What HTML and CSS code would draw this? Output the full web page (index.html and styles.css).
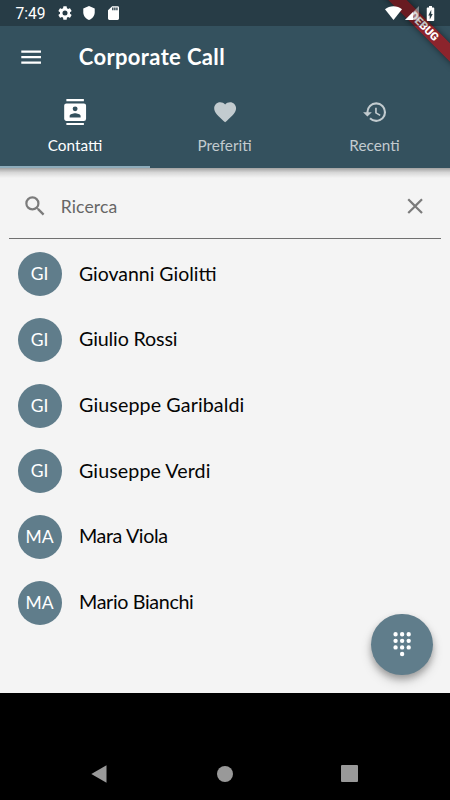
FILE: index.html
```html
<!DOCTYPE html>
<html lang="it">
<head>
<meta charset="utf-8">
<title>Corporate Call</title>
<link rel="stylesheet" href="styles.css">
</head>
<body>
<div class="phone">
  <header class="header">
    <div class="statusbar">
      <span class="clock">7:49</span>
      <svg class="st-gear" viewBox="2 2 20 20"><path d="M19.14 12.94c.04-.3.06-.61.06-.94s-.02-.64-.07-.94l2.03-1.58a.5.5 0 0 0 .12-.61l-1.92-3.32a.5.5 0 0 0-.59-.22l-2.39.96c-.5-.38-1.03-.7-1.62-.94l-.36-2.54a.48.48 0 0 0-.48-.41h-3.84a.47.47 0 0 0-.47.41l-.36 2.54c-.59.24-1.13.57-1.62.94l-2.39-.96a.48.48 0 0 0-.59.22L2.74 8.87a.48.48 0 0 0 .12.61l2.03 1.58a6.6 6.6 0 0 0-.02 1.88l-2.03 1.58a.5.5 0 0 0-.12.61l1.92 3.32c.12.22.37.29.59.22l2.39-.96c.5.38 1.03.7 1.62.94l.36 2.54c.05.24.24.41.48.41h3.84c.24 0 .44-.17.47-.41l.36-2.54c.59-.24 1.13-.56 1.62-.94l2.39.96c.22.08.47 0 .59-.22l1.92-3.32a.5.5 0 0 0-.12-.61zM12 15.6a3.6 3.6 0 1 1 0-7.2 3.6 3.6 0 0 1 0 7.2z"/></svg>
      <svg class="st-shield" viewBox="3 1 18 22"><path d="M12 1 3 5v6c0 5.55 3.84 10.74 9 12 5.16-1.26 9-6.45 9-12V5z"/></svg>
      <svg class="st-card" viewBox="4 2 16 20"><path d="M18 2h-8L4 8v12a2 2 0 0 0 2 2h12a2 2 0 0 0 2-2V4a2 2 0 0 0-2-2zm-6 6h-2V4h2zm3 0h-2V4h2zm3 0h-2V4h2z"/></svg>
      <span class="spacer"></span>
      <svg class="st-wifi" viewBox="0 0 17 14"><path d="M8.500 14 0 3.300C4.600-.9 12.400-.9 17 3.300z"/></svg>
      <svg class="st-signal" viewBox="0 0 14 14"><path d="M0 14 14 0v14z" opacity=".4"/><path d="M0 14 8 6v8z"/></svg>
      <svg class="st-battery" viewBox="7 2 10 20"><path d="M15.670 4H14V2h-4v2H8.330C7.600 4 7 4.600 7 5.330v15.330C7 21.400 7.600 22 8.330 22h7.330c.74 0 1.340-.6 1.340-1.330V5.330C17 4.600 16.400 4 15.670 4zM11 20v-5.500H9L13 7v5.500h2z"/></svg>
    </div>
    <div class="toolbar">
      <svg class="icon menu" viewBox="0 0 24 24"><path d="M3 18h18v-2H3zm0-5h18v-2H3zm0-7v2h18V6z"/></svg>
      <h1 class="title"><span>Corporate Call</span></h1>
    </div>
    <nav class="tabs">
      <a class="tab active">
        <svg class="icon" viewBox="0 0 24 24"><path d="M20 0H4v2h16zM4 24h16v-2H4zM20 4H4a2 2 0 0 0-2 2v12c0 1.100.9 2 2 2h16a2 2 0 0 0 2-2V6a2 2 0 0 0-2-2zm-8 2.750a2.250 2.250 0 1 1 0 4.500 2.250 2.250 0 0 1 0-4.500zM17 17H7v-1.500c0-1.670 3.330-2.500 5-2.500s5 .83 5 2.500z"/></svg>
        <span class="t-contatti">Contatti</span>
      </a>
      <a class="tab">
        <svg class="icon" viewBox="0 0 24 24"><path d="m12 21.350-1.450-1.320C5.400 15.360 2 12.280 2 8.500 2 5.420 4.420 3 7.500 3c1.740 0 3.410.81 4.500 2.090C13.090 3.810 14.760 3 16.500 3 19.580 3 22 5.420 22 8.500c0 3.780-3.400 6.860-8.550 11.540z"/></svg>
        <span class="t-preferiti">Preferiti</span>
      </a>
      <a class="tab">
        <svg class="icon" viewBox="0 0 24 24"><path d="M13 3a9 9 0 0 0-9 9H1l3.890 3.890.07.14L9 12H6c0-3.870 3.130-7 7-7s7 3.130 7 7-3.130 7-7 7c-1.930 0-3.680-.79-4.940-2.060l-1.420 1.420A8.950 8.950 0 0 0 13 21a9 9 0 0 0 0-18zm-1 5v5l4.280 2.540.72-1.210-3.500-2.080V8z"/></svg>
        <span class="t-recenti">Recenti</span>
      </a>
    </nav>
    <div class="ribbon">DEBUG</div>
  </header>
  <main class="content">
    <div class="search">
      <svg class="icon" viewBox="0 0 24 24"><path d="M15.500 14h-.79l-.28-.27A6.470 6.470 0 0 0 16 9.500 6.500 6.500 0 1 0 9.500 16c1.610 0 3.090-.59 4.230-1.570l.27.28v.79l5 4.990L20.490 19zm-6 0a4.500 4.500 0 1 1 0-9 4.500 4.500 0 0 1 0 9z"/></svg>
      <span class="hint">Ricerca</span>
      <svg class="icon" viewBox="0 0 24 24"><path d="M19 6.410 17.590 5 12 10.590 6.410 5 5 6.410 10.590 12 5 17.590 6.410 19 12 13.410 17.590 19 19 17.590 13.410 12z"/></svg>
    </div>
    <ul class="list">
      <li class="row"><span class="avatar">GI</span><span class="name n1">Giovanni Giolitti</span></li>
      <li class="row"><span class="avatar">GI</span><span class="name n2">Giulio Rossi</span></li>
      <li class="row"><span class="avatar">GI</span><span class="name n3">Giuseppe Garibaldi</span></li>
      <li class="row"><span class="avatar">GI</span><span class="name n4">Giuseppe Verdi</span></li>
      <li class="row"><span class="avatar">MA</span><span class="name n5">Mara Viola</span></li>
      <li class="row"><span class="avatar">MA</span><span class="name n6">Mario Bianchi</span></li>
    </ul>
    <div class="fab">
      <svg class="icon" viewBox="0 0 24 24"><path d="M12 19a2 2 0 1 0 0 4 2 2 0 0 0 0-4zM6 1a2 2 0 1 0 0 4 2 2 0 0 0 0-4zm0 6a2 2 0 1 0 0 4 2 2 0 0 0 0-4zm0 6a2 2 0 1 0 0 4 2 2 0 0 0 0-4zm12-8a2 2 0 1 0 0-4 2 2 0 0 0 0 4zm-6 8a2 2 0 1 0 0 4 2 2 0 0 0 0-4zm6 0a2 2 0 1 0 0 4 2 2 0 0 0 0-4zm0-6a2 2 0 1 0 0 4 2 2 0 0 0 0-4zm-6 0a2 2 0 1 0 0 4 2 2 0 0 0 0-4zm0-6a2 2 0 1 0 0 4 2 2 0 0 0 0-4z"/></svg>
    </div>
  </main>
  <footer class="navbar">
    <div><svg class="nav-back" viewBox="0 0 16 18"><path d="M15.500 .3v17.400L.3 9z"/></svg></div>
    <div><span class="nav-home"></span></div>
    <div><span class="nav-recent"></span></div>
  </footer>
</div>
</body>
</html>
```

FILE: styles.css
```css
* { box-sizing: border-box; }
body { margin: 0; font-family: Lato, "Open Sans", sans-serif; }
svg { display: block; fill: currentColor; flex: none; }
.phone { width: 450px; height: 800px; display: flex; flex-direction: column; overflow: hidden; background: #000; }
.icon { width: 26.25px; height: 26.25px; }

.header { position: relative; z-index: 1; height: 168px; background: #34515e; color: #fff; overflow: hidden; flex: none; }
.statusbar { position: relative; z-index: 2; height: 26px; display: flex; align-items: center; padding: 0 15.500px 0 15.500px; background: rgba(0, 0, 0, .25); }
.clock { width: 42.500px; font: 400 15.600px Roboto, sans-serif; padding-top: 2px; }
.st-gear { width: 14px; height: 14px; margin-right: 11px; }
.st-shield { width: 12px; height: 14px; margin-right: 12.500px; }
.st-card { width: 11px; height: 14px; }
.spacer { flex: 1; }
.st-wifi { width: 17px; height: 14px; margin-right: 2.500px; }
.st-signal { width: 14px; height: 14px; margin-right: 7px; }
.st-battery { width: 9px; height: 15px; }

.toolbar { height: 61px; display: flex; align-items: center; padding: 1px 0 0 17.500px; }
.title { margin: 0 0 0 35px; font-size: 22px; font-weight: 700; line-height: 30px; letter-spacing: .36px; }

.tabs { display: grid; grid-template-columns: repeat(3, 1fr); height: 81px; }
.tab { display: flex; flex-direction: column; align-items: center; padding-top: 12px; font-size: 15.300px; color: #c2cbcf; border-bottom: 2px solid transparent; white-space: nowrap; }
.tab span { line-height: 20px; margin-top: 10px; }
.tab .t-preferiti, .tab .t-recenti { margin-right: 1px; }
.tab.active { color: #fff; border-bottom-color: #8eacbb; }

.ribbon { position: absolute; z-index: 1; left: 373.700px; top: 19.700px; width: 100px; height: 13.200px; transform: rotate(45deg); background: rgba(170, 22, 28, .75); box-shadow: 0 0 6px rgba(0, 0, 0, .5); color: #fff; font: 900 11.200px/13.200px Roboto, sans-serif; text-align: center; }

.content { position: relative; height: 525px; background: #f4f4f4; flex: none; }
.content::before { content: ""; position: absolute; inset: 0 0 auto; height: 10px; background: linear-gradient(rgba(0, 0, 0, .34), rgba(0, 0, 0, .12) 45%, transparent); }
.search { height: 71px; margin: 0 9px; padding: 6px 13px 0 12.500px; display: flex; align-items: center; color: #7b7b7b; border-bottom: 1px solid #707070; }
.hint { flex: 1; margin-left: 13px; font-size: 17.500px; letter-spacing: .15px; color: #666; }
.list { list-style: none; margin: 0; padding: 2.500px 0 0; }
.row { height: 65.650px; display: flex; align-items: center; padding-left: 17.500px; }
.avatar { width: 44px; height: 44px; border-radius: 50%; background: #607d8b; color: #fff; font-size: 17.500px; line-height: 44px; text-align: center; }
.name { margin-left: 17.500px; font-size: 19.700px; line-height: 24px; margin-top: -1px; color: #050505; white-space: nowrap; }
.n1 { font-size: 19.450px; }
.n2 { letter-spacing: -.15px; }
.n3 { letter-spacing: .1px; }
.n4 { letter-spacing: .07px; }
.n5 { letter-spacing: -.4px; }
.n6 { letter-spacing: -.35px; }
.fab { position: absolute; right: 17.500px; bottom: 18px; width: 61.500px; height: 61.500px; border-radius: 50%; background: #607d8b; color: #fff; display: grid; place-items: center; box-shadow: 0 4px 6px rgba(0, 0, 0, .25), 0 6px 12px rgba(0, 0, 0, .16); }

.navbar { flex: 1; display: flex; justify-content: center; padding-top: 53.500px; color: #999; }
.navbar div { width: 124.500px; height: 54px; display: grid; place-items: center; }
.nav-back { width: 16px; height: 18px; margin-right: 3px; }
.nav-home { width: 16px; height: 16px; border-radius: 50%; background: #999; }
.nav-recent { width: 17px; height: 17px; border-radius: 1px; background: #999; }
```
